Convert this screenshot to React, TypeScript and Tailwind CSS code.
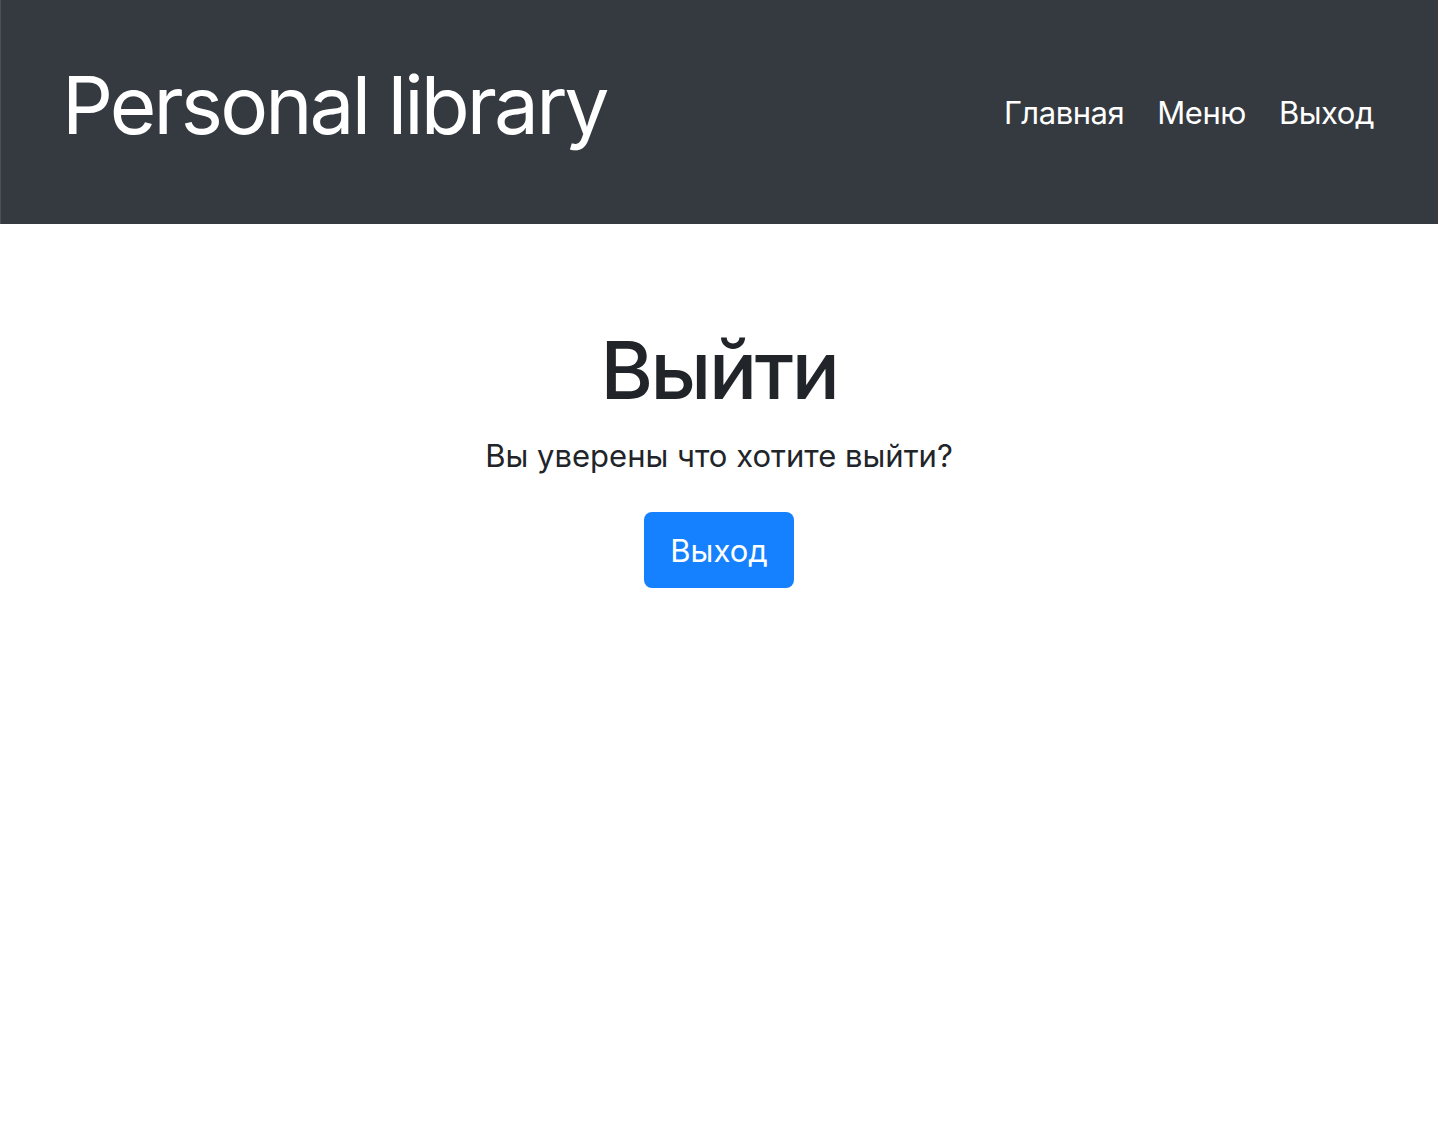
export default function App() {
  const links = ["Главная", "Меню", "Выход"];

  return (
    <div className="min-h-screen bg-white font-['Inter',sans-serif] text-[#212529]">
      {/* Шапка */}
      <header className="flex h-[224px] items-start justify-between border-l border-[#4a5058] bg-[#343a40] pl-[61px] pr-16">
        <a href="#" className="mt-[65px] text-[80px] leading-none tracking-[-0.036em] text-white">
          Personal library
        </a>
        <nav className="mt-[97px] flex gap-[33px]">
          {links.map((link) => (
            <a key={link} href="#" className="text-[31px] leading-none tracking-[-0.015em] text-white">
              {link}
            </a>
          ))}
        </nav>
      </header>

      {/* Подтверждение выхода */}
      <main className="flex flex-col items-center pt-[106px]">
        <h1 className="text-[80px] leading-none font-medium tracking-[-0.03em]">Выйти</h1>
        <p className="mt-[30px] text-[31px] leading-none">Вы уверены что хотите выйти?</p>
        <button className="mt-[41px] flex h-[76px] w-[150px] items-center justify-center rounded-lg bg-[#1681fe] text-[31px] leading-none text-white">
          Выход
        </button>
      </main>
    </div>
  );
}
